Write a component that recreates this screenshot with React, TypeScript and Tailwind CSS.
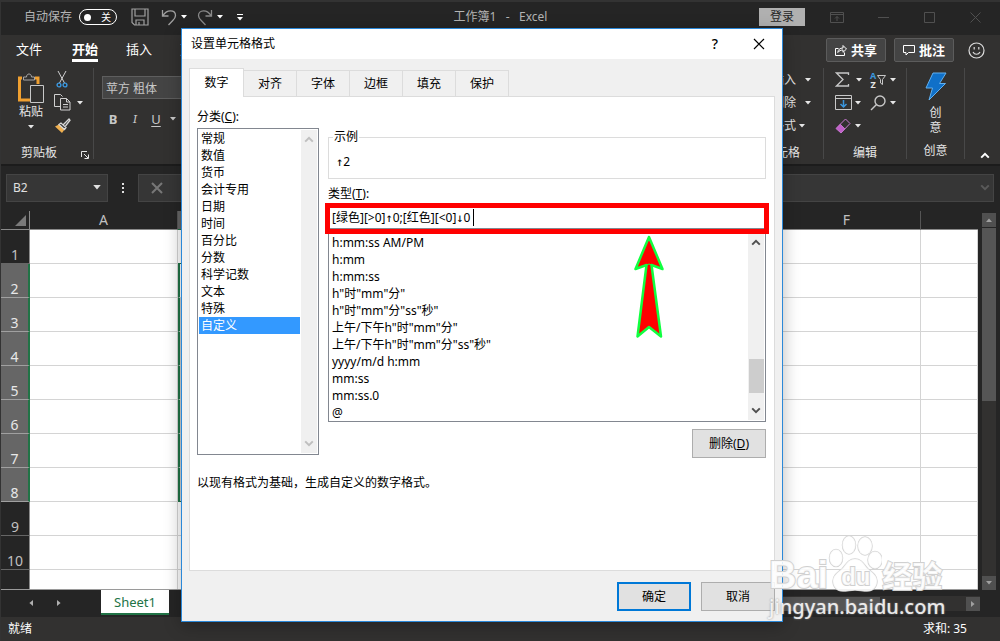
import type { ReactNode } from "react";
import clsx from "clsx";

const dialogTabs = ["数字", "对齐", "字体", "边框", "填充", "保护"];

const categories = [
  "常规",
  "数值",
  "货币",
  "会计专用",
  "日期",
  "时间",
  "百分比",
  "分数",
  "科学记数",
  "文本",
  "特殊",
  "自定义",
];

const formats = [
  "h:mm:ss AM/PM",
  "h:mm",
  "h:mm:ss",
  'h"时"mm"分"',
  'h"时"mm"分"ss"秒"',
  '上午/下午h"时"mm"分"',
  '上午/下午h"时"mm"分"ss"秒"',
  "yyyy/m/d h:mm",
  "mm:ss",
  "mm:ss.0",
  "@",
];

const columns = [
  { name: "A", width: 148, picked: false },
  { name: "B", width: 149, picked: true },
  { name: "C", width: 149, picked: true },
  { name: "D", width: 149, picked: true },
  { name: "E", width: 148, picked: true },
  { name: "F", width: 148, picked: false },
  { name: "", width: undefined, picked: false },
];

const rows = [1, 2, 3, 4, 5, 6, 7, 8, 9, 10, 11];

function Caret({ className }: { className?: string }) {
  return (
    <svg viewBox="0 0 6 4" className={clsx("h-[4px] w-[6px] shrink-0 fill-current", className)} aria-hidden="true">
      <path d="M0 0h6L3 3.6z" />
    </svg>
  );
}

function Chevron({ up, className }: { up?: boolean; className?: string }) {
  return (
    <svg viewBox="0 0 10 7" className={clsx("h-[7px] w-[10px] fill-none stroke-current stroke-2", className)} aria-hidden="true">
      <path d={up ? "M1.2 5.6L5 1.8l3.8 3.8" : "M1.2 1.4L5 5.2l3.8-3.8"} />
    </svg>
  );
}

/* ── Title bar ── */
function TitleBar() {
  return (
    <header className="flex h-[35px] shrink-0 items-center border-t-2 border-[#333] bg-[#252525] pb-[3px] text-[#b4b4b4]">
      <div className="flex flex-1 items-center">
        <span className="ml-[23px]">自动保存</span>
        <button
          type="button"
          aria-label="自动保存"
          className="ml-[7px] flex h-[16px] w-[38px] items-center justify-between rounded-full border border-white pl-[4px] pr-[5px] text-[10px] leading-none text-white"
        >
          <span className="size-[7px] rounded-full bg-white" />关
        </button>
        <button type="button" aria-label="保存" className="ml-[14px]">
          <svg viewBox="0 0 18 18" className="size-[18px] fill-none stroke-[#a0a0a0] stroke-[1.2]">
            <path d="M1 1h16v16H3.5L1 14.5zM4 1v7h10V1M5 17v-5h8v5M8 14v3" />
          </svg>
        </button>
        <button type="button" aria-label="撤消" className="ml-[12px] flex items-center gap-[4px] text-white">
          <svg viewBox="0 0 16 18" className="h-[18px] w-[16px] fill-none stroke-[#a0a0a0] stroke-[1.3]">
            <path d="M1.5 2v6h6M1.800 7.800C4 4 7 2.800 9.500 2.800c3 0 5 2 5 4.700 0 2-1 3.200-2.500 4.700L7.500 17" />
          </svg>
          <Caret />
        </button>
        <button type="button" aria-label="恢复" className="ml-[10px] flex items-center gap-[4px] text-white">
          <svg viewBox="0 0 16 18" className="h-[18px] w-[16px] fill-none stroke-[#8a8a8a] stroke-[1.3]">
            <path d="M14.5 2v6h-6M14.200 7.800C12 4 9 2.800 6.500 2.800c-3 0-5 2-5 4.700 0 2 1 3.200 2.500 4.700L8.500 17" />
          </svg>
          <Caret />
        </button>
        <button type="button" aria-label="自定义快速访问工具栏" className="ml-[14px] flex flex-col items-center gap-[2px] text-white">
          <span className="h-px w-[6px] bg-white" />
          <Caret />
        </button>
      </div>
      <h1 className="whitespace-pre">工作簿1   -   Excel</h1>
      <div className="flex flex-1 items-center justify-end text-[#505050]">
        <button type="button" className="h-[18px] w-[46px] bg-[#b0b0b0] text-[12px] leading-[18px] text-[#252525]">
          登录
        </button>
        <button type="button" aria-label="功能区显示选项" className="ml-[25px]">
          <svg viewBox="0 0 14 11" className="h-[11px] w-[14px] fill-none stroke-current">
            <path d="M.5.5h13v10H.5zM.5 2.5h13M7 9V4.5M5 6.5l2-2 2 2" />
          </svg>
        </button>
        <button type="button" aria-label="最小化" className="ml-[34px]">
          <svg viewBox="0 0 11 11" className="size-[11px] fill-none stroke-current">
            <path d="M0 5.5h11" />
          </svg>
        </button>
        <button type="button" aria-label="最大化" className="ml-[35px]">
          <svg viewBox="0 0 11 11" className="size-[11px] fill-none stroke-current">
            <path d="M.5.5h10v10H.5z" />
          </svg>
        </button>
        <button type="button" aria-label="关闭窗口" className="ml-[35px] mr-[19px]">
          <svg viewBox="0 0 11 11" className="size-[11px] fill-none stroke-current">
            <path d="M.5.5l10 10M10.5.5l-10 10" />
          </svg>
        </button>
      </div>
    </header>
  );
}

/* ── Ribbon tabs ── */
function RibbonTabs() {
  return (
    <nav className="flex h-[30px] shrink-0 items-center justify-between bg-[#323130] px-[15px] text-[13px] text-white">
      <div className="flex gap-[28px] pb-[2px]">
        <a href="#file" className="pt-[2px] leading-[20px]">文件</a>
        <a href="#home" className="ml-[2px] border-b-[3px] border-white pt-[2px] font-bold leading-[20px]">开始</a>
        <a href="#insert" className="pt-[2px] leading-[20px]">插入</a>
        <a href="#layout" className="pt-[2px] leading-[20px]">页面布局</a>
      </div>
      <div className="flex items-center gap-[8px] font-bold">
        <button type="button" className="flex h-[24px] w-[60px] items-center justify-center gap-[4px] rounded-[2px] border border-[#5c5c5c] bg-[#444]">
          <svg viewBox="0 0 12 12" className="size-[12px] fill-none stroke-white">
            <path d="M3.5 4.5h-3v7h9V8.500M2.800 8.500C3 5.500 5 4 8 4V1.500l3.500 3.500L8 8.300V6C5.800 6 4 6.800 2.800 8.500z" />
          </svg>
          共享
        </button>
        <button type="button" className="flex h-[24px] w-[60px] items-center justify-center gap-[4px] rounded-[2px] border border-[#5c5c5c] bg-[#444]">
          <svg viewBox="0 0 12 12" className="size-[12px] fill-none stroke-white">
            <path d="M.5 1.5h11v7H5.500l-2.500 2.500V8.500H.5z" />
          </svg>
          批注
        </button>
        <button type="button" aria-label="反馈" className="ml-[6px]">
          <svg viewBox="0 0 17 17" className="size-[17px] fill-none stroke-[#dcdcdc] stroke-[1.2]">
            <circle cx="8.5" cy="8.5" r="7.5" />
            <path d="M5 10c1.500 3 5.500 3 7 0M6.200 5v2.500M10.800 5v2.500" />
          </svg>
        </button>
      </div>
    </nav>
  );
}

function RibbonGroup({ label, className, children }: { label: string; className: string; children: ReactNode }) {
  return (
    <section className={clsx("flex shrink-0 flex-col border-r border-[#484848]", className)} aria-label={label}>
      <div className="flex h-[69px]">{children}</div>
      <div className="pt-[7px] text-center leading-[18px]">{label}</div>
    </section>
  );
}

function ToolButton({ label, children, className }: { label: string; children: ReactNode; className?: string }) {
  return (
    <button type="button" aria-label={label} className={clsx("flex h-[23px] items-center", className)}>
      {children}
    </button>
  );
}

function Ribbon() {
  return (
    <div className="flex h-[99px] shrink-0 bg-[#323130] pb-[5px] pt-[3px] text-[#e6e6e6]">
      <section className="flex w-[93px] shrink-0 flex-col border-r border-[#484848]" aria-label="剪贴板">
        <div className="flex h-[69px] pl-[15px]">
          <button type="button" className="flex w-[30px] flex-col items-center">
            <svg viewBox="0 0 28 30" className="mt-[5px] h-[30px] w-[28px] fill-none">
              <path d="M5 5H2.500v22H13M18 5h3v6" className="stroke-[#f0a030] stroke-3" />
              <path d="M6.500 7V4h3c0-4 5-4 5 0h3v3z" className="fill-[#323130] stroke-[#a8a8a8]" />
              <path d="M13.500 12.500h13v17h-13z" className="fill-[#323130] stroke-[#c8c8c8]" />
            </svg>
            <span className="leading-[18px]">粘贴</span>
            <Caret className="mt-[4px]" />
          </button>
          <div className="ml-[8px] flex flex-col">
            <ToolButton label="剪切" className="pl-[2px]">
              <svg viewBox="0 0 12 17" className="h-[17px] w-[12px] fill-none">
                <path d="M2 0l6.500 12M10 0L3.500 12" className="stroke-[#d0d0d0]" />
                <circle cx="3" cy="14" r="1.9" className="stroke-[#3a96dd] stroke-[1.4]" />
                <circle cx="9" cy="14" r="1.9" className="stroke-[#3a96dd] stroke-[1.4]" />
              </svg>
            </ToolButton>
            <ToolButton label="复制" className="gap-[6px]">
              <svg viewBox="0 0 17 17" className="size-[17px] fill-none stroke-[#d0d0d0]">
                <path d="M6 12.500H.5V.500h6l2 2" />
                <path d="M6.500 4.500h6l3.500 3.500v8H6.500zM12.500 4.500V8H16M9 10.500h5M9 13h5" />
              </svg>
              <Caret />
            </ToolButton>
            <ToolButton label="格式刷">
              <svg viewBox="0 0 17 16" className="h-[16px] w-[17px] fill-none">
                <path d="M1 8.500l4-2 5.500 5-2.500 3.500z" className="fill-[#f0b050]" />
                <path d="M5 6.500l2-1.500 5 4.500-1.500 2zM9.500 6.500L15 1l1 1.200-4.500 5.800" className="stroke-[#d8d8d8] stroke-[1.3]" />
              </svg>
            </ToolButton>
          </div>
        </div>
        <div className="flex items-center pl-[20px] pt-[7px] leading-[18px]">
          剪贴板
          <button type="button" aria-label="剪贴板选项" className="ml-auto mr-[4px] mt-[4px]">
            <svg viewBox="0 0 8 8" className="size-[8px] fill-none stroke-current">
              <path d="M.5 6V.500H6M3 3l4 4M7.500 3.500v4h-4" />
            </svg>
          </button>
        </div>
      </section>

      <section className="flex flex-1 flex-col pl-[8px]" aria-label="字体">
        <div className="mt-[8px]">
          <input
            aria-label="字体名称"
            defaultValue="苹方 粗体"
            className="h-[23px] w-[110px] border border-[#5e5e5e] bg-[#444] px-[3px] text-[12px] text-[#c8c8c8] outline-none"
          />
        </div>
        <div className="mt-[9px] flex h-[22px] items-center text-[13px] text-[#c8c8c8]">
          <button type="button" className="w-[22px] font-bold">B</button>
          <button type="button" className="w-[22px] font-serif italic">I</button>
          <button type="button" className="w-[20px] underline underline-offset-2">U</button>
          <Caret className="ml-[4px]" />
        </div>
      </section>

      <RibbonGroup label="单元格" className="w-[83px]">
        <div className="flex flex-col pl-[31px]">
          <ToolButton label="插入" className="gap-[9px]">插入<Caret /></ToolButton>
          <ToolButton label="删除" className="gap-[9px]">删除<Caret /></ToolButton>
          <ToolButton label="格式" className="gap-[3px]">格式<Caret /></ToolButton>
        </div>
      </RibbonGroup>
      <RibbonGroup label="编辑" className="w-[83px]">
        <div className="flex w-[46px] flex-col pl-[11px]">
          <ToolButton label="自动求和" className="gap-[6px]">
            <svg viewBox="0 0 15 15" className="size-[15px] fill-none stroke-[#c8c8c8] stroke-[1.3]">
              <path d="M13.500 3V1H1.500L8 7.500 1.500 14h12v-2" />
            </svg>
            <Caret />
          </ToolButton>
          <ToolButton label="填充" className="gap-[3px]">
            <svg viewBox="0 0 17 15" className="h-[15px] w-[17px] fill-none">
              <path d="M.5.500h16v14H.5zM.5 3.500h16" className="stroke-[#c8c8c8]" />
              <path d="M8.500 5v7M5.500 9l3 3 3-3" className="stroke-[#3a96dd] stroke-[1.5]" />
            </svg>
            <Caret />
          </ToolButton>
          <ToolButton label="清除" className="gap-[4px]">
            <svg viewBox="0 0 16 16" className="size-[16px] fill-none">
              <path d="M1 10.500l4-4.500 5 5-4 4z" className="fill-[#c060c8]" />
              <path d="M1 10.500L10.500 1 15 5.500 6 15zM5.200 6.300l4.800 4.800" className="stroke-[#c878d0]" />
            </svg>
            <Caret />
          </ToolButton>
        </div>
        <div className="flex flex-col">
          <ToolButton label="排序和筛选" className="gap-[4px]">
            <span className="flex flex-col text-[9px] font-bold leading-[9px]">
              <span className="text-[#3a96dd]">A</span>
              <span>Z</span>
            </span>
            <svg viewBox="0 0 9 10" className="-ml-[3px] h-[10px] w-[9px] fill-none stroke-[#c8c8c8]">
              <path d="M.5.500h8L5.500 4.500v5l-2-1.500V4.500z" />
            </svg>
            <Caret />
          </ToolButton>
          <ToolButton label="查找和选择" className="gap-[4px]">
            <svg viewBox="0 0 16 16" className="size-[16px] fill-none stroke-[#c8c8c8] stroke-[1.4]">
              <circle cx="10" cy="6" r="5" />
              <path d="M6.500 9.500L1 15" />
            </svg>
            <Caret />
          </ToolButton>
        </div>
      </RibbonGroup>
      <RibbonGroup label="创意" className="w-[58px]">
        <button type="button" aria-label="创意" className="flex w-full flex-col items-center pt-[4px]">
          <svg viewBox="0 0 22 28" className="h-[29px] w-[22px] fill-[#1070c8] stroke-[#60b0f0]">
            <path d="M8 .500h13L14.500 11h6L4 27.500l3.500-12H1z" />
          </svg>
          <span className="w-[12px] pt-[4px] leading-[15px]">创意</span>
        </button>
      </RibbonGroup>
      <div className="flex w-[35px] items-end justify-center pl-[4px] text-white">
        <button type="button" aria-label="折叠功能区">
          <Chevron up />
        </button>
      </div>
    </div>
  );
}

/* ── Name box and formula bar ── */
function FormulaBar() {
  return (
    <div className="flex h-[47px] shrink-0 items-center border-t-2 border-[#1c1c1c] bg-[#252525] pb-[9px] pl-[5px] pr-[6px] pt-[7px] text-[#e0e0e0]">
      <div className="flex h-[28px] w-[102px] items-center border border-[#444] bg-[#363636] pr-[6px]">
        <input aria-label="名称框" defaultValue="B2" className="min-w-0 flex-1 bg-transparent px-[6px] text-[12px] outline-none" />
        <Caret className="h-[5px] w-[8px]" />
      </div>
      <div className="flex w-[30px] flex-col items-center gap-[2px]">
        <span className="size-[2px] bg-current" />
        <span className="size-[2px] bg-current" />
        <span className="size-[2px] bg-current" />
      </div>
      <div className="flex h-[28px] flex-1 items-center justify-between border border-[#444] bg-[#363636] pl-[12px] pr-[3px] text-[#777]">
        <svg viewBox="0 0 12 12" className="size-[12px] stroke-current stroke-2" aria-hidden="true">
          <path d="M1 1l10 10M11 1L1 11" />
        </svg>
        <Chevron className="text-[#5a5a5a]" />
      </div>
    </div>
  );
}

/* ── Worksheet ── */
function Sheet() {
  return (
    <div className="flex min-h-0 flex-1 bg-[#252525]">
      <div className="flex-1 overflow-hidden border-b border-[#9a9a9a]">
        <table className="w-full table-fixed border-separate border-spacing-0 bg-white text-[14px]">
          <colgroup>
            <col className="w-[29px]" />
            {columns.map((c) => (
              <col key={c.name} style={{ width: c.width }} />
            ))}
          </colgroup>
          <thead>
            <tr className="h-[19px] bg-[#252525] text-[#c0c0c0]">
              <th className="border-b border-r border-[#8a8a8a] p-0">
                <svg viewBox="0 0 11 11" className="ml-auto mr-[3px] size-[11px] fill-[#7a7a7a]" aria-label="全选">
                  <path d="M11 0v11H0z" />
                </svg>
              </th>
              {columns.map((c) => (
                <th
                  key={c.name}
                  scope="col"
                  className={clsx(
                    "border-b border-r p-0 font-normal leading-[18px] last:border-r-0",
                    c.picked ? "border-b-[#217346] border-r-[#8a8a8a] bg-[#666]" : "border-b-[#8a8a8a] border-r-[#555]",
                  )}
                >
                  {c.name}
                </th>
              ))}
            </tr>
          </thead>
          <tbody>
            {rows.map((r) => {
              const picked = r >= 2 && r <= 8;
              return (
                <tr key={r} className="h-[34px]">
                  <th
                    scope="row"
                    className={clsx(
                      "border-b p-0 align-bottom font-normal leading-[16px]",
                      picked
                        ? "border-r-2 border-b-[#a0a0a0] border-r-[#217346] bg-[#666] text-[#e8e8e8]"
                        : "border-r border-b-[#666] border-r-[#8a8a8a] bg-[#252525] text-[#c0c0c0]",
                    )}
                  >
                    {r}
                  </th>
                  {columns.map((c) => {
                    const inRange = picked && c.picked;
                    const active = r === 2 && c.name === "B";
                    const edge = c.picked && (r === 1 || r === 8);
                    return (
                      <td
                        key={c.name}
                        className={clsx(
                          "border-b border-r p-0",
                          edge ? "border-[#217346]" : "border-[#d4d4d4]",
                          inRange && !active && "bg-[#d0d0d0]",
                          inRange && c.name === "B" && "border-l-2 border-l-[#217346]",
                        )}
                      />
                    );
                  })}
                </tr>
              );
            })}
          </tbody>
        </table>
      </div>
      <div className="flex w-[22px] flex-col items-center pr-px pt-[2px]" aria-hidden="true">
        <span className="flex size-[14px] items-center justify-center bg-[#505050] text-[#a0a0a0]">
          <Caret className="rotate-180" />
        </span>
        <span className="mt-[1px] h-[173px] w-[14px] bg-[#555]" />
        <span className="w-[14px] flex-1 bg-[#323130]" />
        <span className="flex size-[14px] items-center justify-center bg-[#505050] text-[#a0a0a0]">
          <Caret />
        </span>
      </div>
    </div>
  );
}

function SheetTabs() {
  return (
    <div className="flex h-[27px] shrink-0 items-start bg-[#252525] text-[#b0b0b0]">
      <div className="flex h-[26px] w-[100px] items-center gap-[22px] pl-[27px]">
        <button type="button" aria-label="上一张工作表"><Caret className="rotate-90" /></button>
        <button type="button" aria-label="下一张工作表"><Caret className="-rotate-90" /></button>
      </div>
      <button type="button" className="h-[25px] w-[68px] border-b-2 border-[#217346] bg-white text-[13px] leading-[22px] text-[#217346]">
        Sheet1
      </button>
      <div className="ml-auto mr-[20px] flex h-[15px] w-[37%] items-center self-center bg-[#323130]" aria-hidden="true">
        <span className="ml-auto mr-[86px] h-[14px] w-[55%] bg-[#555]" />
        <span className="flex size-[14px] items-center justify-center bg-[#505050] text-[#a0a0a0]">
          <Caret className="-rotate-90" />
        </span>
      </div>
    </div>
  );
}

/* ── Format Cells dialog ── */
function FormatDialog() {
  return (
    <div
      role="dialog"
      aria-labelledby="dialog-title"
      className="absolute left-[180px] top-[28px] flex w-[602px] flex-col border border-[#2b88d8] bg-[#f0f0f0] text-black shadow-[0_4px_16px_rgba(0,0,0,0.28)]"
    >
      <div className="flex h-[30px] items-center bg-white pl-[9px] pr-[17px]">
        <h2 id="dialog-title" className="flex-1">设置单元格格式</h2>
        <button type="button" aria-label="帮助" className="mr-[35px] text-[14px] font-medium">?</button>
        <button type="button" aria-label="关闭">
          <svg viewBox="0 0 12 12" className="size-[12px] stroke-black stroke-[1.2]">
            <path d="M1 1l10 10M11 1L1 11" />
          </svg>
        </button>
      </div>

      <div className="flex flex-col px-[7px] pt-[9px]">
        <div role="tablist" className="-mb-px flex items-end">
          {dialogTabs.map((tab, i) => (
            <button
              key={tab}
              type="button"
              role="tab"
              aria-selected={i === 0}
              className={clsx(
                "border-r border-t border-[#dcdcdc]",
                i === 0 ? "z-10 h-[29px] w-[55px] border-l bg-white" : "h-[27px] w-[53px] border-b",
              )}
            >
              {tab}
            </button>
          ))}
        </div>

        <div className="flex min-h-[475px] flex-col border border-[#dcdcdc] bg-white pb-[12px] pl-[7px] pr-[8px] pt-[11px]">
          <div className="flex gap-[9px]">
            <div className="w-[122px]">
              <div id="category-label" className="leading-[18px]">
                分类(<u>C</u>):
              </div>
              <div className="mt-[2px] flex h-[327px] border border-[#828790]">
                <ul role="listbox" aria-labelledby="category-label" className="flex-1 py-px pl-px">
                  {categories.map((name) => (
                    <li
                      key={name}
                      role="option"
                      aria-selected={name === "自定义"}
                      className="h-[17px] px-[2px] leading-[17px] aria-selected:bg-[#3399ff] aria-selected:text-white"
                    >
                      {name}
                    </li>
                  ))}
                </ul>
                <div className="my-px ml-px mr-px flex w-[16px] flex-col items-center justify-between bg-[#f0f0f0] py-[6px] text-[#bfbfbf]">
                  <Chevron up />
                  <Chevron />
                </div>
              </div>
            </div>

            <div className="min-w-0 flex-1">
              <fieldset className="mt-[20px] h-[51px] border border-[#dcdcdc] px-[7px]">
                <legend className="-ml-[3px] px-px leading-[18px]">示例</legend>
                <output className="block pt-[7px] leading-[18px]">↑2</output>
              </fieldset>
              <label htmlFor="format-type" className="mt-[6px] block leading-[18px]">
                类型(<u>T</u>):
              </label>
              <div className="relative mt-[4px]">
                <input
                  id="format-type"
                  defaultValue="[绿色][>0]↑0;[红色][<0]↓0"
                  className="block h-[22px] w-full border border-[#828790] px-[3px] pb-[2px] text-[12px] outline-none"
                />
                <span className="absolute left-[145px] top-[2px] h-[17px] w-px bg-black" />
                <span className="pointer-events-none absolute -inset-x-[3px] -bottom-[5px] -top-[4px] border-[5px] border-[#ff0000]" />
              </div>
              <div className="flex h-[193px] border border-[#828790]">
                <ul role="listbox" aria-label="类型列表" className="flex-1 pl-[3px] pt-[4px]">
                  {formats.map((f) => (
                    <li key={f} role="option" aria-selected={false} className="h-[17px] leading-[17px]">
                      {f}
                    </li>
                  ))}
                </ul>
                <div className="my-px mr-px flex w-[16px] flex-col items-center bg-[#f0f0f0] pb-[6px] pt-[8px] text-[#505050]">
                  <Chevron up />
                  <span className="mb-[14px] mt-auto h-[34px] w-[15px] bg-[#cdcdcd]" />
                  <Chevron />
                </div>
              </div>
              <div className="mt-[7px] flex justify-end">
                <button type="button" className="h-[29px] w-[74px] border border-[#adadad] bg-[#e1e1e1]">
                  删除(<u>D</u>)
                </button>
              </div>
            </div>
          </div>
          <p className="mt-[16px] leading-[18px]">以现有格式为基础，生成自定义的数字格式。</p>
        </div>
      </div>

      <div className="flex justify-end gap-[10px] pb-[10px] pr-[7px] pt-[11px]">
        <button type="button" className="h-[29px] w-[74px] border-2 border-[#0078d7] bg-[#e1e1e1]">
          确定
        </button>
        <button type="button" className="h-[29px] w-[74px] border border-[#adadad] bg-[#e1e1e1]">
          取消
        </button>
      </div>

      {/* Arrow pointing at the type box */}
      <svg viewBox="0 0 32 104" className="absolute left-[451px] top-[206px] h-[104px] w-[32px]" aria-hidden="true">
        <path
          d="M16 2L2.500 34 13.500 30 4.500 101.500 16 92l12 9.500L18.500 30l11 4z"
          className="fill-[#ff0000] stroke-[#10ff40] stroke-[2.5]"
          strokeLinejoin="round"
        />
        <path d="M13.500 30L16 29l2.500 1" className="fill-none stroke-[#10ff40] stroke-1" />
      </svg>
    </div>
  );
}

function Watermark() {
  return (
    <div className="pointer-events-none absolute bottom-[20px] right-[55px] flex w-[176px] flex-col items-start text-white">
      <div className="flex h-[60px] w-full items-end font-bold text-white/85 [paint-order:stroke] [-webkit-text-stroke:2px_#d0d0d0]">
        <span className="font-['Liberation_Sans'] text-[38px] leading-[36px]">Bai</span>
        <span className="relative h-[60px] w-[54px] shrink-0">
          <svg viewBox="0 0 54 60" className="h-[60px] w-[54px] fill-white/85 stroke-[#d4d4d4] stroke-[1.5]" aria-hidden="true">
            <ellipse cx="8" cy="25" rx="6.5" ry="8.5" />
            <ellipse cx="21" cy="12" rx="6.5" ry="9" />
            <ellipse cx="37" cy="13" rx="7" ry="9" />
            <ellipse cx="47" cy="27" rx="7" ry="8.5" />
            <path d="M27 26c-7 0-9 6-13 10-5 4-9 7-9 12 0 6 4 10 10 10 4 0 8-1 12-1s8 1 12 1c6 0 10-4 10-10 0-5-4-8-9-12-4-4-6-10-13-10z" />
          </svg>
          <span className="absolute left-[13px] top-[31px] font-['Liberation_Sans'] text-[24px] leading-[26px]">du</span>
        </span>
        <span className="text-[30px] leading-[34px]">经验</span>
      </div>
      <div className="text-[20px] font-medium leading-[28px] text-white/85 [text-shadow:0_0_2px_#888]">jingyan.baidu.com</div>
    </div>
  );
}

export default function App() {
  return (
    <div className="relative flex h-screen w-full flex-col overflow-hidden border-l border-[#333] bg-[#252525] font-['Noto_Sans','DejaVu_Sans_Mono','Noto_Sans_CJK_SC',sans-serif] text-[12px] leading-[18px]">
      <TitleBar />
      <RibbonTabs />
      <Ribbon />
      <FormulaBar />
      <Sheet />
      <SheetTabs />
      <footer className="flex h-[24px] shrink-0 items-center justify-between bg-[#323130] pl-[7px] pr-[33px] text-white">
        <span>就绪</span>
        <span>求和: 35</span>
      </footer>
      <FormatDialog />
      <Watermark />
    </div>
  );
}
